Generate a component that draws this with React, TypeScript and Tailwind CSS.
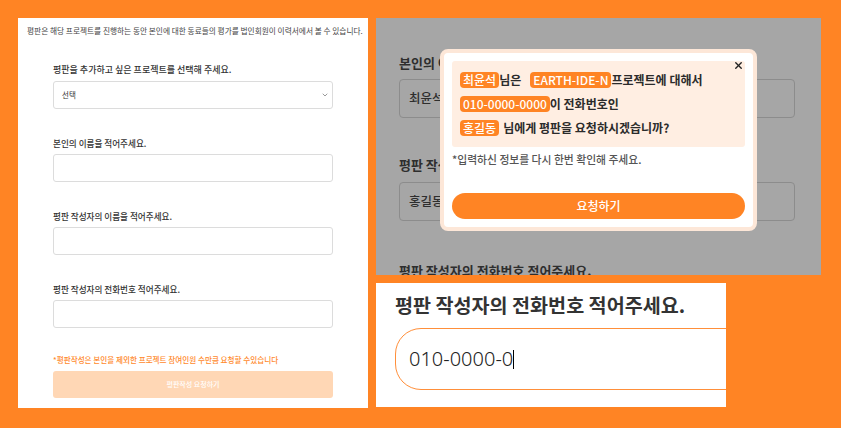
import { ChevronDown, X } from 'lucide-react';

const fields = ['본인의 이름을 적어주세요.', '평판 작성자의 이름을 적어주세요.', '평판 작성자의 전화번호 적어주세요.'];

function Chip({ children }: { children: string }) {
  return (
    <span className="inline-flex items-center h-[16px] px-[3px] rounded-[4px] bg-[#FF8424] text-white font-medium">
      {children}
    </span>
  );
}

function FormPanel() {
  return (
    <div className="w-[350px] h-[390px] bg-white flex flex-col">
      <p className="mt-[8px] pl-[9px] h-[10px] leading-[10px] text-[7.7px] text-[#444] whitespace-nowrap">
        평판은 해당 프로젝트를 진행하는 동안 본인에 대한 동료들의 평가를 법인회원이 이력서에서 볼 수 있습니다.
      </p>
      <div className="pl-[35px] mt-[28px] flex flex-col gap-[28px]">
        <div className="flex flex-col gap-[5px]">
          <label className="h-[12px] leading-[12px] text-[9px] font-medium text-[#333]">
            평판을 추가하고 싶은 프로젝트를 선택해 주세요.
          </label>
          <div className="w-[280px] h-[28px] border border-[#dcdcdc] rounded-[3px] flex items-center justify-between pl-[8px] pr-[3px]">
            <span className="text-[7.5px] text-[#333]">선택</span>
            <ChevronDown size={8} strokeWidth={2} className="text-[#666]" />
          </div>
        </div>
        {fields.map((f) => (
          <div key={f} className="flex flex-col gap-[5px]">
            <label className="h-[12px] leading-[12px] text-[8.6px] font-medium text-[#333]">{f}</label>
            <div className="w-[280px] h-[28px] border border-[#dcdcdc] rounded-[3px]" />
          </div>
        ))}
      </div>
      <p className="pl-[35px] mt-[27px] h-[10px] leading-[10px] text-[7.6px] font-medium text-[#FF8A2E]">
        *평판작성은 본인을 제외한 프로젝트 참여인원 수만큼 요청할 수있습니다
      </p>
      <div className="ml-[35px] mt-[6px] w-[280px] h-[27px] rounded-[3px] bg-[#FFD7B5] flex items-center justify-center text-[7px] font-medium text-white">
        평판작성 요청하기
      </div>
    </div>
  );
}

function ModalPanel() {
  return (
    <div className="relative w-[445px] h-[257px] bg-[#a6a6a6] overflow-hidden">
      <div className="pl-[23px] flex flex-col text-[#2e2e2e]">
        <p className="mt-[37px] h-[16px] leading-[16px] text-[13px] font-semibold">본인의 이름을 적어주세요.</p>
        <div className="mt-[8px] w-[396px] h-[39px] border border-[#8c8c8c] rounded-[4px] flex items-center pl-[9px] text-[12.5px] font-medium">
          최윤석
        </div>
        <p className="mt-[39px] h-[16px] leading-[16px] text-[13px] font-semibold">평판 작성자의 이름을 적어주세요.</p>
        <div className="mt-[9px] w-[396px] h-[39px] border border-[#8c8c8c] rounded-[4px] flex items-center pl-[9px] text-[12.5px] font-medium">
          홍길동
        </div>
        <p className="mt-[42px] h-[16px] leading-[16px] text-[13px] font-semibold">평판 작성자의 전화번호 적어주세요.</p>
      </div>

      <div className="absolute left-[64px] top-[31px] w-[317px] h-[182px] bg-white border-4 border-[#fde7d8] rounded-[8px] p-[8px] flex flex-col">
        <div className="relative h-[86px] bg-[#FFEEE2] rounded-[3px] pl-[8px] pt-[11px] flex flex-col gap-[8px] text-[12px] font-semibold text-[#2b2b2b]">
          <button className="absolute right-[1px] top-[-1px] text-[#222]">
            <X size={11} strokeWidth={3} />
          </button>
          <div className="h-[16px] flex items-center whitespace-nowrap">
            <Chip>최윤석</Chip>
            <span>님은</span>
            <span className="w-[9px]" />
            <Chip>EARTH-IDE-N</Chip>
            <span>프로젝트에 대해서</span>
          </div>
          <div className="h-[16px] flex items-center whitespace-nowrap">
            <Chip>010-0000-0000</Chip>
            <span>이 전화번호인</span>
          </div>
          <div className="h-[16px] flex items-center whitespace-nowrap">
            <Chip>홍길동</Chip>
            <span className="ml-[4px]">님에게 평판을 요청하시겠습니까?</span>
          </div>
        </div>
        <p className="mt-[5px] h-[14px] leading-[14px] text-[10.8px] font-medium text-[#555]">
          *입력하신 정보를 다시 한번 확인해 주세요.
        </p>
        <div className="mt-auto h-[26px] rounded-full bg-[#FF8424] flex items-center justify-center text-[12px] font-medium text-white">
          요청하기
        </div>
      </div>
    </div>
  );
}

function ZoomPanel() {
  return (
    <div className="w-[350px] h-[124px] bg-white overflow-hidden flex flex-col pl-[19px]">
      <p className="mt-[10px] h-[24px] leading-[24px] text-[19.6px] font-semibold text-[#333] whitespace-nowrap">
        평판 작성자의 전화번호 적어주세요.
      </p>
      <div className="mt-[11px] w-[360px] h-[62px] shrink-0 border border-[#FF8F3A] rounded-[26px] flex items-center pl-[13px]">
        <span className="font-['Noto_Sans',sans-serif] text-[20px] font-light text-[#222]">010-0000-0</span>
        <span className="w-[1px] h-[19px] bg-black" />
      </div>
    </div>
  );
}

export default function App() {
  return (
    <div className="w-[841px] h-[428px] bg-[#FF8424] flex gap-[8px] pl-[18px] pt-[18px] font-['Noto_Sans_CJK_KR','Noto_Sans',sans-serif]">
      <FormPanel />
      <div className="flex flex-col gap-[8px]">
        <ModalPanel />
        <ZoomPanel />
      </div>
    </div>
  );
}
